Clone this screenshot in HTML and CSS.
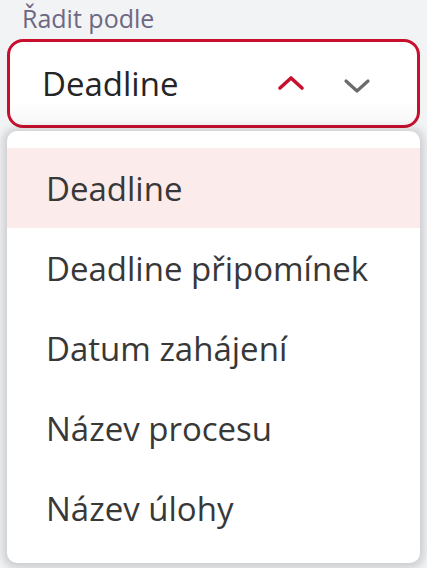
FILE: index.html
```html
<!DOCTYPE html>
<html lang="cs">
<head>
<meta charset="utf-8">
<link rel="stylesheet" href="styles.css">
</head>
<body>
<div class="field">
  <label class="label">Řadit podle</label>
  <div class="select">
    <span class="value">Deadline</span>
    <span class="arrows">
      <svg class="chev up" width="28" height="16" viewBox="0 0 28 16"><path d="M3 13 L14 3 L25 13" fill="none" stroke="#c8102e" stroke-width="3.6" stroke-linecap="round" stroke-linejoin="round"/></svg>
      <svg class="chev down" width="28" height="16" viewBox="0 0 28 16"><path d="M3 3 L14 13 L25 3" fill="none" stroke="#6b6b6b" stroke-width="3.2" stroke-linecap="round" stroke-linejoin="round"/></svg>
    </span>
  </div>
  <ul class="menu">
    <li class="item active">Deadline</li>
    <li class="item">Deadline připomínek</li>
    <li class="item">Datum zahájení</li>
    <li class="item">Název procesu</li>
    <li class="item">Název úlohy</li>
  </ul>
</div>
</body>
</html>
```
FILE: styles.css
```css
html, body {
  margin: 0;
  padding: 0;
  height: 100%;
  background: #f2f3f5;
  font-family: "Open Sans", "Noto Sans", sans-serif;
}
.field {
  padding: 2px 7px 0 7px;
  display: flex;
  flex-direction: column;
}
.label {
  margin-left: 15px;
  font-size: 25px;
  line-height: 32px;
  color: #6c6883;
}
.select {
  margin-top: 5px;
  width: 413px;
  height: 89px;
  box-sizing: border-box;
  border: 3.5px solid #c8102e;
  border-radius: 16px;
  background: linear-gradient(#ffffff 70%, #f7f7f8);
  display: flex;
  align-items: center;
  justify-content: space-between;
  padding: 0 46px 0 32px;
}
.value {
  font-size: 33px;
  color: #252525;
}
.arrows {
  display: flex;
  gap: 38px;
  align-items: center;
}
.chev.up { margin-top: -2px; }
.chev.down { margin-top: 4px; }
.menu {
  list-style: none;
  margin: 3px 0 0 0;
  padding: 17px 0 15px 0;
  width: 413px;
  background: #fff;
  border-radius: 10px;
  box-shadow: 0 1px 8px 4px rgba(0,0,0,0.16);
}
.item {
  height: 80px;
  display: flex;
  align-items: center;
  padding-left: 39px;
  font-size: 33px;
  color: #383838;
}
.item.active {
  background: #fbebeb;
}
```
